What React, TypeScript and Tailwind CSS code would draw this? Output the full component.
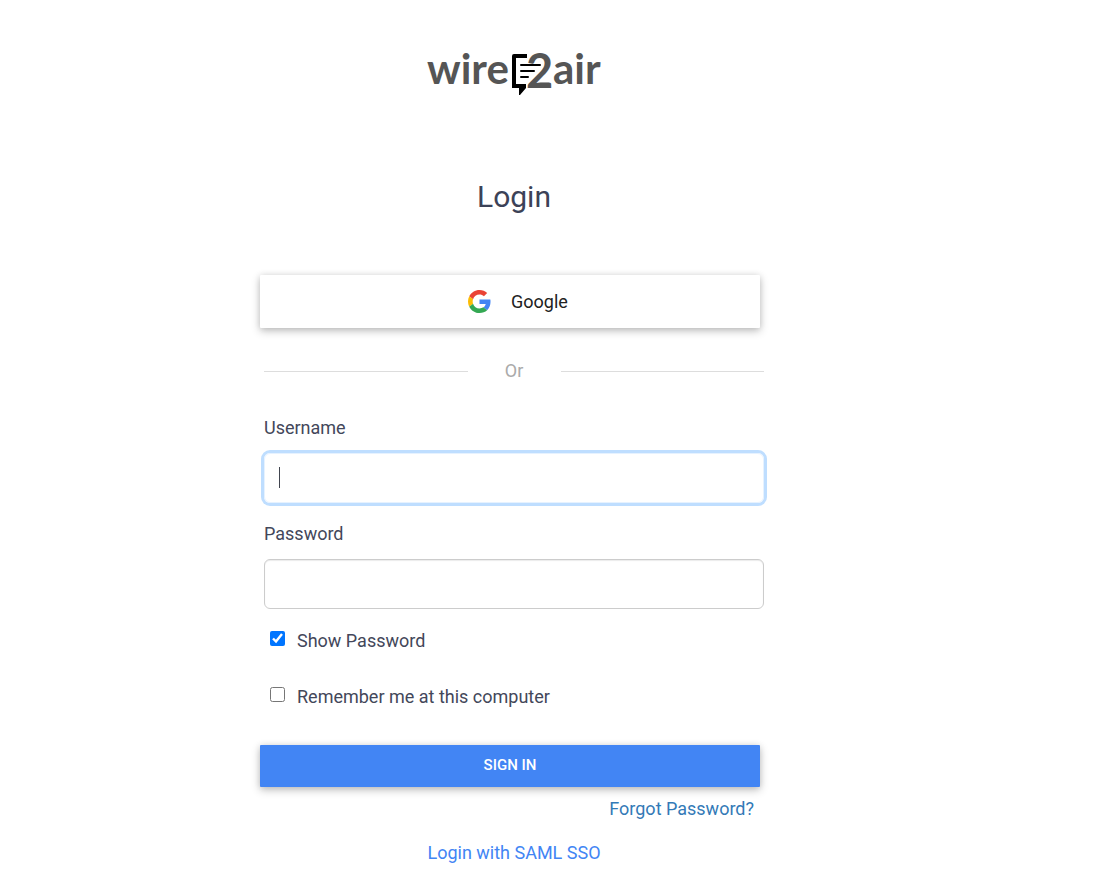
import { useState } from "react";

function Logo() {
  return (
    <svg
      width="176"
      height="46"
      viewBox="0 0 176 46"
      role="img"
      aria-label="wire2air"
      className="overflow-visible font-['Lato',sans-serif] font-bold"
    >
      <g fill="#555555">
        <text x="1" y="33" fontSize="42">
          wire
        </text>
        <text x="100" y="37" fontSize="47">
          2
        </text>
        <text x="127" y="33" fontSize="42">
          air
        </text>
      </g>
      <path d="M101 3H88Q86 3 86 5V37H93V44H94L100 37V33H90V7H101Z" fill="#000000" />
      <path
        d="M95 14H114M95 20H108M95 26H102"
        stroke="#000000"
        strokeWidth="2"
        strokeLinecap="round"
      />
    </svg>
  );
}

function GoogleIcon() {
  return (
    <svg className="size-[23px]" viewBox="0 0 48 48" aria-hidden="true">
      <path
        fill="#EA4335"
        d="M24 9.5c3.54 0 6.71 1.22 9.21 3.6l6.85-6.85C35.9 2.38 30.47 0 24 0 14.62 0 6.51 5.38 2.56 13.22l7.98 6.19C12.43 13.72 17.74 9.5 24 9.5z"
      />
      <path
        fill="#4285F4"
        d="M46.98 24.55c0-1.57-.15-3.09-.38-4.55H24v9.02h12.94c-.58 2.96-2.26 5.48-4.78 7.18l7.73 6c4.51-4.18 7.09-10.36 7.09-17.65z"
      />
      <path
        fill="#FBBC05"
        d="M10.53 28.59c-.48-1.45-.76-2.99-.76-4.59s.27-3.14.76-4.59l-7.98-6.19C.92 16.46 0 20.12 0 24c0 3.88.92 7.54 2.56 10.78l7.97-6.19z"
      />
      <path
        fill="#34A853"
        d="M24 48c6.48 0 11.93-2.13 15.89-5.81l-7.73-6c-2.15 1.45-4.92 2.3-8.16 2.3-6.26 0-11.57-4.22-13.47-9.91l-7.98 6.19C6.51 42.62 14.62 48 24 48z"
      />
    </svg>
  );
}

export default function App() {
  const [username, setUsername] = useState("");
  const [password, setPassword] = useState("");
  const [showPassword, setShowPassword] = useState(true);
  const [remember, setRemember] = useState(false);

  return (
    <main className="min-h-screen bg-white pt-[51px] pb-1 pl-4 pr-[85px] font-['Roboto',sans-serif] text-lg leading-7 text-[#43475a]">
      <form
        className="mx-auto flex w-full max-w-[500px] flex-col"
        onSubmit={(e) => e.preventDefault()}
      >
        <div className="flex justify-center">
          <Logo />
        </div>
        <h1 className="mt-20 text-center text-[30px] leading-10 text-[#3c4257]">
          Login
        </h1>

        <button
          type="button"
          className="mt-[58px] -ml-1 mr-1 flex h-[53px] cursor-pointer items-center justify-center gap-5 rounded-[1px] bg-white pl-4 text-[#222222] shadow-[0_3px_8px_rgba(0,0,0,0.25),0_0_6px_rgba(0,0,0,0.08)]"
        >
          <GoogleIcon />
          Google
        </button>

        <div className="mt-[29px] flex items-center text-[#aaaaaa]">
          <span className="h-px flex-1 bg-[#dddddd]" />
          <span className="w-[93px] text-center">Or</span>
          <span className="h-px flex-1 bg-[#dddddd]" />
        </div>

        <label htmlFor="username" className="mt-[29px]">
          Username
        </label>
        <div className="relative mt-[11px]">
          <input
            id="username"
            type="text"
            autoFocus
            placeholder=" "
            value={username}
            onChange={(e) => setUsername(e.target.value)}
            className="peer h-[50px] w-full rounded-md border border-[#cccccc] px-3.5 outline-none placeholder-shown:caret-transparent focus:border-[#e6f2ff] focus:ring-3 focus:ring-[#bfdeff]"
          />
          {/* steady caret while the field is empty */}
          <span className="pointer-events-none absolute top-3.5 left-[15px] hidden h-[21px] w-px bg-[#41454f] peer-focus:peer-placeholder-shown:block" />
        </div>

        <label htmlFor="password" className="mt-[17px]">
          Password
        </label>
        <input
          id="password"
          type={showPassword ? "text" : "password"}
          value={password}
          onChange={(e) => setPassword(e.target.value)}
          className="mt-[11px] h-[50px] rounded-md border border-[#cccccc] px-3.5 shadow-[inset_0_1px_1px_rgba(0,0,0,0.08)] outline-none focus:border-[#e6f2ff] focus:ring-3 focus:ring-[#bfdeff]"
        />

        <label className="mt-[18px] flex items-start gap-3 pl-1.5">
          <input
            type="checkbox"
            checked={showPassword}
            onChange={(e) => setShowPassword(e.target.checked)}
            className="mt-1 size-[15px]"
          />
          Show Password
        </label>
        <label className="mt-7 flex items-start gap-3 pl-1.5">
          <input
            type="checkbox"
            checked={remember}
            onChange={(e) => setRemember(e.target.checked)}
            className="mt-1 size-[15px]"
          />
          Remember me at this computer
        </label>

        <button
          type="submit"
          className="mt-[34px] -ml-1 mr-1 h-[42px] cursor-pointer rounded-[1px] bg-[#4285f4] pb-0.5 text-[15px] font-medium text-white shadow-[0_3px_8px_rgba(0,0,0,0.25),0_0_6px_rgba(0,0,0,0.08)]"
        >
          SIGN IN
        </button>
        <a href="#forgot" className="mt-2 mr-2.5 self-end text-[#337ab7]">
          Forgot Password?
        </a>
        <a href="#saml" className="mt-4 self-center text-[#4285f4]">
          Login with SAML SSO
        </a>
      </form>
    </main>
  );
}
